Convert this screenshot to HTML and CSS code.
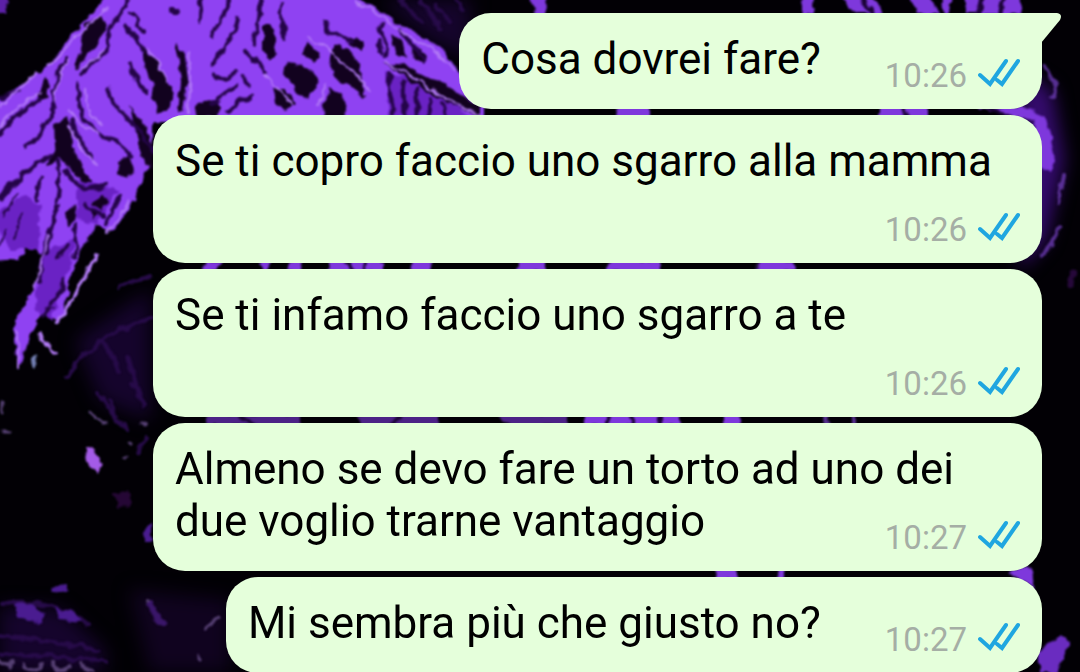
FILE: index.html
```html
<!DOCTYPE html>
<html lang="it">
<head>
<meta charset="utf-8">
<meta name="viewport" content="width=device-width, initial-scale=1">
<title>Chat</title>
<link rel="stylesheet" href="styles.css">
</head>
<body>
<svg class="wallpaper" viewBox="0 0 1080 672" preserveAspectRatio="xMidYMid slice" aria-hidden="true">
  <defs>
    <filter id="soft" filterUnits="userSpaceOnUse" x="-20" y="-20" width="1120" height="712" color-interpolation-filters="sRGB">
      <feTurbulence type="fractalNoise" baseFrequency="0.09" numOctaves="2" seed="4" result="n"/>
      <feDisplacementMap in="SourceGraphic" in2="n" scale="9" xChannelSelector="R" yChannelSelector="G"/>
      <feGaussianBlur stdDeviation="1.2"/>
    </filter>
    <filter id="glow" filterUnits="userSpaceOnUse" x="-40" y="-40" width="1160" height="752" color-interpolation-filters="sRGB"><feGaussianBlur stdDeviation="9"/></filter>
  </defs>
  <rect width="1080" height="672" fill="#020005"/>

  <g filter="url(#glow)" fill="#15042c">
    <path d="M380 0H470V60L430 40ZM76 340L150 290V420L100 400ZM0 606L60 608L105 650V672H0Z"/>
    <path d="M1020 70L1052 90L1064 160L1046 240L1020 270Z" fill="#350b6e"/>
    <path d="M130 590L230 600V672H150Z" fill="#10031f"/>
  </g>

  <g filter="url(#soft)">
    <g fill="#8f42f2">
      <path d="M112 -10H352L364 2L400 24L440 46L458 70L484 100V122H153V155L134 200L112 232L96 226L75 262L60 322L44 310L30 334L18 372L14 340L18 316L34 290L42 262L30 232L20 260L-10 262V104L22 84L48 66L66 42Z"/>
      <path d="M-10 -10H12L4 14H-10Z" fill="#5c20a8"/>
    </g>
    <g fill="#6a22c4">
      <path d="M24 196L42 206L38 250L10 250L-10 216ZM78 180L118 190L96 226L76 218ZM44 250L76 240L52 320L34 310Z"/>
      <path d="M386 72L440 88L470 118H389Z"/>
    </g>
    <g fill="#12021f">
      <path d="M84 24L101 16L108 24L98 44L86 54L80 66L74 68L82 42Z"/>
      <path d="M142 44L155 62L168 80L175 94L166 112H158L152 98L154 86L144 66Z"/>
      <path d="M175 42L185 56L188 80L184 112H178L181 82Z"/>
      <path d="M195 108L207 98L220 108L216 118H194Z"/>
      <path d="M54 124L66 116L72 128L73 147L84 170L94 184L84 184L68 168L60 158L46 166L55 146Z"/>
      <path d="M118 160L128 156L134 168L128 180L119 174Z"/>
      <path d="M130 106L142 120L153 144V170L146 166L138 146Z"/>
      <path d="M306 42L314 48L319 57L314 62L304 52Z"/>
      <path d="M286 63L301 65L314 73L318 86L307 99L294 91L283 73Z"/>
      <path d="M334 45L350 50L358 62L366 98L350 85L333 75L329 58Z"/>
      <path d="M272 88L286 90L296 104L286 110L275 102Z"/>
      <path d="M328 88L343 97L348 118H322Z"/>
      <path d="M384 62L404 65L438 82L480 106V118L436 96L408 80Z"/>
      <path d="M264 24L271 24L277 54L270 60L264 50Z"/>
      <path d="M392 33L402 40L406 58L397 56ZM414 44L426 56L424 64L412 58Z"/>
      <path d="M348 36L364 42L360 52L350 44Z"/>
      <path d="M36 94L46 76L50 90L40 104ZM100 194L108 200L102 210L94 204ZM66 212L74 204L76 218L68 226ZM90 210L98 214L92 222Z"/>
    </g>
    <g fill="none" stroke="#240548" stroke-width="4" stroke-linecap="round" stroke-linejoin="round">
      <path d="M128 0C120 18 102 32 108 45C105 58 88 64 80 74M66 58C56 76 52 94 53 116C42 124 40 140 26 146M0 134C8 122 22 112 39 100M0 98L18 92"/>
      <path d="M78 84C76 102 82 120 96 132C108 138 122 144 132 158M108 88C112 104 122 116 134 124C142 134 146 142 153 152M130 64C132 76 140 84 146 92M72 120C72 134 84 142 92 158"/>
      <path d="M0 198C12 184 28 170 52 154M58 160C60 180 60 192 54 212M38 200C34 190 40 184 42 178M66 170C76 188 90 194 106 184"/>
      <path d="M200 0C200 8 204 14 200 20M229 0C226 12 220 22 212 34M238 18C236 34 224 50 212 64M214 74C222 84 230 78 236 70M212 104C222 94 230 92 238 86M228 112C236 104 246 98 252 96M242 76L250 84M245 50C254 60 262 64 264 72"/>
      <path d="M260 0C261 14 256 34 254 44M280 4C279 18 286 30 284 38M132 14C140 18 134 28 144 32M126 26C136 36 138 42 142 50M172 12H178"/>
      <path d="M326 20C322 34 340 36 352 42M382 24C374 36 390 42 386 56M378 42L382 54M400 30C410 44 420 50 424 62M390 74C386 88 392 98 394 114M404 82C400 94 406 102 404 118M416 88L418 118M430 100L428 118M444 104L446 118"/>
      <path d="M60 204C54 224 48 234 46 252M56 214C48 236 42 250 38 282M76 224C70 240 84 244 74 256M66 246L56 260M86 204C90 212 98 210 104 216M62 280C68 290 58 296 52 302M52 306L44 316M120 196L106 224" />
      <path d="M4 216C10 208 12 200 16 194M14 240C18 230 16 224 22 214M0 244L6 230" stroke-width="2"/>
    </g>
    <g fill="none" stroke="#b27af6" stroke-width="2" stroke-linecap="round">
      <path d="M0 106L20 88L36 74M48 66L66 48L84 30L108 8M54 102C58 84 60 70 68 60M0 128C10 112 26 102 40 92M82 68L98 58L102 50M84 88C84 102 90 116 102 124M69 110L84 128L98 134M188 52C192 74 190 92 188 112M148 48C156 64 164 70 168 82"/>
      <path d="M70 126L82 150L96 164M48 236L34 288M18 330V370M130 200L108 232"/>
      <path d="M356 0L400 30L436 52L454 70M386 62L420 82L460 106L480 116M308 36L328 48L354 72L370 92M320 106L326 84M264 74L292 104"/>
      <path d="M97 254L84 278L68 306L56 324" stroke-width="4"/>
      <path d="M40 332L46 346L56 353" stroke-width="3"/>
    </g>
    <path d="M32 357L36 354L38 362L34 369L31 365Z" fill="#7480b4"/>

    <g fill="none" stroke="#270b49" stroke-width="4" stroke-linecap="round">
      <path d="M66 378C82 350 112 330 152 318M118 286L152 276M104 342L120 372M128 358L142 400M98 394L126 430M132 382L144 406M110 400L118 416"/>
      <path d="M400 0L424 24M420 0L440 28M436 6L450 22M456 0L462 10"/>
      <path d="M0 604C30 598 62 604 88 624M0 636C34 640 68 642 100 650M0 654C40 654 70 658 106 662M145 440L136 452"/>
    </g>
    <g fill="#4a1c90">
      <path d="M14 604L32 602L46 616L40 624L18 616ZM56 608L74 612L82 622L60 620ZM50 586L66 584L68 592L52 594Z"/>
      <path d="M142 534L152 522V542H144Z"/>
      <path d="M114 494L128 490L132 504L118 508Z" fill="#250735"/>
    </g>
    <path d="M84 450L92 448L103 464L97 475L89 466Z" fill="#a45be7"/>
    <g fill="none" stroke="#564073" stroke-width="3" stroke-linecap="round">
      <path d="M90 412L106 424M148 600L164 626M206 628L218 618M198 656V658M144 423L146 424M129 442L131 444M125 457L127 458M2 432H10M2 402V412"/>
      <path d="M0 660C2 668 10 668 12 662M24 664C26 674 38 674 42 664M52 662C54 672 66 674 70 664M80 664C84 672 90 668 92 670" stroke-width="4"/>
    </g>
    <path d="M148 604L152 602L168 624L164 628L152 620Z" fill="#3a1669"/>

    <g fill="#7e38dc">
      <path d="M526 -10H546L547 14H536ZM800 -10H815L812 14H804ZM836 -10H862L886 14H856ZM904 -10H926L938 14H918ZM940 -10H952L950 14H944ZM962 -10H1018L1022 14H966Z"/>
      <path d="M620 106H650V118H616ZM880 106H930V118H880ZM968 106H1022L1046 116L1054 155L1050 172L1038 168L1034 120Z"/>
      <path d="M206 260H222L216 272H202ZM258 260H272L266 272H262ZM290 260H304L298 272H286ZM330 260H382V272H326ZM412 260H434L430 272H410ZM520 260H546V272H516ZM612 260H660V272H604ZM760 260H796V272H752Z"/>
      <path d="M585 414H680V426H585ZM724 414H740V426H724Z"/>
      <path d="M210 414H300V426H206ZM356 414H440V426H362ZM496 414H568V426H510Z" opacity=".6"/>
      <path d="M714 568H738V580H718ZM776 568H784V580H778ZM1008 574L1030 566L1036 590L1024 582Z"/>
      <path d="M1040 650L1062 636L1070 644L1056 672H1040Z" fill="#6a2cc0"/>
    </g>
    <g fill="none" stroke="#1a0335" stroke-width="4">
      <path d="M862 -4L872 14M982 -4L978 14M1004 -4L1000 14M346 260L354 272M366 260L360 272M607 414V426M633 414V426M660 414V426M986 106L1010 118M904 106L908 118M238 414L256 426M400 414L392 426"/>
    </g>
    <g fill="none" stroke="#6b3bb3" stroke-width="4" stroke-linecap="round">
      <path d="M1045 66C1050 80 1060 88 1054 96M1064 176L1058 204M1060 226C1056 238 1050 248 1042 256M824 415L828 425M854 415V425" opacity=".8"/>
      <path d="M1074 272L1071 284" stroke="#26083a" stroke-width="7"/>
    </g>
  </g>
</svg>

<main class="chat">
  <article class="bubble bubble--first">
    <svg class="tail" viewBox="0 0 20 30" aria-hidden="true"><path d="M0 0H16Q22 1 19 7L0 30Z"/></svg>
    <span class="text">Cosa dovrei fare?</span>
    <span class="meta"><time datetime="10:26">10:26</time><svg class="ticks" viewBox="0 0 42 30" role="img" aria-label="Letto"><path d="M2 17L12 26L28 3M19 22L24 26L40 3"/></svg></span>
  </article>
  <article class="bubble">
    <span class="text">Se ti copro faccio uno sgarro alla mamma</span>
    <span class="meta"><time datetime="10:26">10:26</time><svg class="ticks" viewBox="0 0 42 30" role="img" aria-label="Letto"><path d="M2 17L12 26L28 3M19 22L24 26L40 3"/></svg></span>
  </article>
  <article class="bubble">
    <span class="text">Se ti infamo faccio uno sgarro a te</span>
    <span class="meta"><time datetime="10:26">10:26</time><svg class="ticks" viewBox="0 0 42 30" role="img" aria-label="Letto"><path d="M2 17L12 26L28 3M19 22L24 26L40 3"/></svg></span>
  </article>
  <article class="bubble">
    <span class="text">Almeno se devo fare un torto ad uno dei due voglio trarne vantaggio</span>
    <span class="meta"><time datetime="10:27">10:27</time><svg class="ticks" viewBox="0 0 42 30" role="img" aria-label="Letto"><path d="M2 17L12 26L28 3M19 22L24 26L40 3"/></svg></span>
  </article>
  <article class="bubble">
    <span class="text">Mi sembra più che giusto no?</span>
    <span class="meta"><time datetime="10:27">10:27</time><svg class="ticks" viewBox="0 0 42 30" role="img" aria-label="Letto"><path d="M2 17L12 26L28 3M19 22L24 26L40 3"/></svg></span>
  </article>
</main>
</body>
</html>
```
FILE: styles.css
```css
* {
  box-sizing: border-box;
}

body {
  margin: 0;
  height: 100vh;
  overflow: hidden;
  background: #020005;
  font-family: Roboto, "Liberation Sans", sans-serif;
}

.wallpaper {
  position: fixed;
  inset: 0;
  z-index: -1;
  width: 100%;
  height: 100%;
}

.chat {
  display: flex;
  flex-direction: column;
  align-items: flex-end;
  gap: 6px;
  padding: 13px 38px 0 153px;
}

.bubble {
  position: relative;
  display: flow-root;
  flex-shrink: 0;
  max-width: 100%;
  padding: 20px 22px 15px;
  border-radius: 32px;
  background: #e5ffdb;
  color: #000;
  font-size: 44px;
  line-height: 52px;
}

.bubble--first {
  border-top-right-radius: 0;
}

.tail {
  position: absolute;
  top: 0;
  left: 100%;
  width: 20px;
  height: 30px;
  margin-left: -1px;
  fill: #e5ffdb;
}

.meta {
  float: right;
  display: flex;
  align-items: flex-start;
  gap: 11px;
  margin-left: 64px;
  padding-top: 25px;
  color: #a5aea5;
  font-size: 33px;
  line-height: 36px;
}

.ticks {
  width: 42px;
  height: 30px;
  fill: none;
  stroke: #1fa6e0;
  stroke-width: 4;
  stroke-linecap: round;
  stroke-linejoin: miter;
}
```
